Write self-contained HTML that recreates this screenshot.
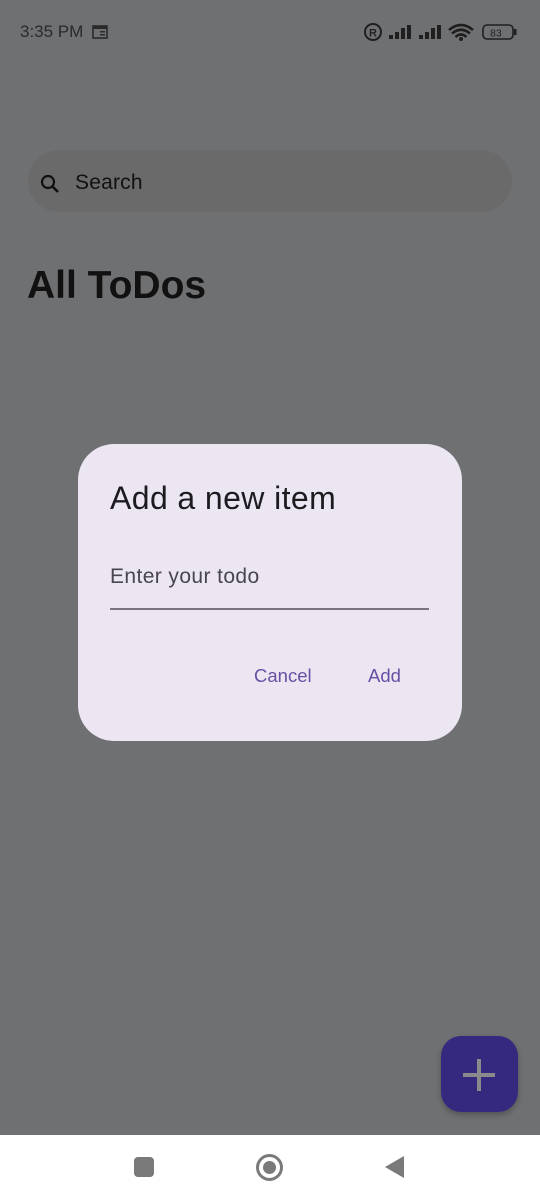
<!DOCTYPE html>
<html><head><meta charset="utf-8"><style>
*{margin:0;padding:0;box-sizing:border-box}
body{width:540px;height:1200px;overflow:hidden;background:#6f7072;font-family:"Liberation Sans",sans-serif;position:relative}
.a{position:absolute}
</style></head><body>
<div class="a" style="left:20px;top:22px;font-size:17px;color:#2a2a2b">3:35 PM</div>
<svg class="a" style="left:92px;top:25px" width="16" height="14"><rect x="1" y="1" width="14" height="12" fill="none" stroke="#2a2a2b" stroke-width="1.6"/><rect x="1" y="1" width="14" height="3" fill="#2a2a2b"/><rect x="8" y="6" width="5" height="1.5" fill="#2a2a2b"/><rect x="8" y="9" width="5" height="1.5" fill="#2a2a2b"/></svg>
<svg class="a" style="left:360px;top:22px" width="160" height="20">
<circle cx="13" cy="10" r="8" fill="none" stroke="#1f1f20" stroke-width="2"/><text x="9" y="14.5" font-size="11" font-weight="bold" fill="#1f1f20" font-family="Liberation Sans">R</text>
<g fill="#1f1f20"><rect x="29" y="13" width="4" height="4"/><rect x="35" y="10" width="4" height="7"/><rect x="41" y="6" width="4" height="11"/><rect x="47" y="3" width="4" height="14"/>
<rect x="59" y="13" width="4" height="4"/><rect x="65" y="10" width="4" height="7"/><rect x="71" y="6" width="4" height="11"/><rect x="77" y="3" width="4" height="14"/></g>
<path d="M89 8 Q101 -2 113 8 M92 11.5 Q101 4 110 11.5 M95.5 15 Q101 10 106.5 15" fill="none" stroke="#1f1f20" stroke-width="2.6"/><circle cx="101" cy="17" r="2" fill="#1f1f20"/>
<rect x="123" y="3" width="30" height="14" rx="4" fill="none" stroke="#1f1f20" stroke-width="1.6"/><rect x="154" y="7" width="2.5" height="6" fill="#1f1f20"/><text x="130" y="14.5" font-size="10.5" fill="#1f1f20" font-family="Liberation Sans">83</text></svg>
<div class="a" style="left:28px;top:150px;width:484px;height:62px;border-radius:31px;background:#6a6a6b"></div>
<svg class="a" style="left:39px;top:173px" width="22" height="22"><circle cx="9" cy="9" r="6" fill="none" stroke="#111" stroke-width="2.2"/><path d="M13.5 13.5 L19 19" stroke="#111" stroke-width="2.6"/></svg>
<div class="a" style="left:75px;top:171px;font-size:21px;color:#111;letter-spacing:0.2px">Search</div>
<div class="a" style="left:27px;top:264px;font-size:39px;font-weight:bold;color:#111">All ToDos</div>
<div class="a" style="left:78px;top:444px;width:384px;height:297px;border-radius:36px;background:#ece6f2"></div>
<div class="a" style="left:110px;top:480px;font-size:32px;color:#1d1b20;letter-spacing:0.4px">Add a new item</div>
<div class="a" style="left:110px;top:565px;font-size:21px;color:#49454f;letter-spacing:0.4px">Enter your todo</div>
<div class="a" style="left:110px;top:608px;width:319px;height:1.5px;background:#79747e"></div>
<div class="a" style="left:254px;top:665px;font-size:18.5px;color:#6750a4">Cancel</div>
<div class="a" style="left:368px;top:665px;font-size:18.5px;color:#6750a4">Add</div>
<div class="a" style="left:441px;top:1036px;width:77px;height:76px;border-radius:20px;background:#35297f;box-shadow:0 3px 6px rgba(0,0,0,.25)"></div>
<div class="a" style="left:477px;top:1059px;width:4px;height:32px;background:#8a8a8c"></div>
<div class="a" style="left:463px;top:1073px;width:32px;height:4px;background:#8a8a8c"></div>
<div class="a" style="left:0;top:1135px;width:540px;height:65px;background:#fff"></div>
<div class="a" style="left:134px;top:1157px;width:20px;height:20px;border-radius:4px;background:#7a7a7a"></div>
<div class="a" style="left:256px;top:1154px;width:27px;height:27px;border-radius:50%;border:3px solid #7a7a7a"></div>
<div class="a" style="left:263px;top:1161px;width:13px;height:13px;border-radius:50%;background:#7a7a7a"></div>
<svg class="a" style="left:384px;top:1155px" width="22" height="24"><path d="M1 12 L20 1 L20 23 Z" fill="#7a7a7a"/></svg>
</body></html>
